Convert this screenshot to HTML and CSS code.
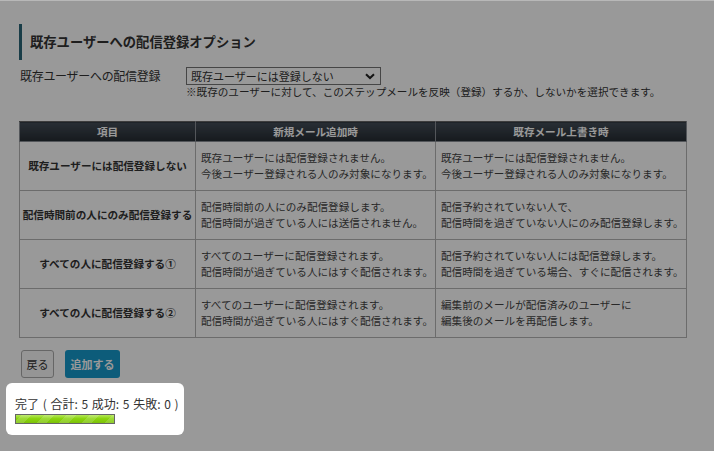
FILE: index.html
```html
<!DOCTYPE html>
<html lang="ja">
<head>
	<meta charset="UTF-8">
	<meta name="viewport" content="width=device-width, initial-scale=1.0">
	<title>既存ユーザーへの配信登録オプション</title>
	<link rel="stylesheet" href="styles.css">
</head>
<body>
	<div class="page">
		<h2 class="section-title">既存ユーザーへの配信登録オプション</h2>
		<div class="form-row">
			<div class="form-label">既存ユーザーへの配信登録</div>
			<div class="form-field">
				<div class="select-box">
					<span>既存ユーザーには登録しない</span>
					<svg class="chevron" width="10" height="7" viewBox="0 0 10 7"><path d="M1 1.2 L5 5 L9 1.2" fill="none" stroke="#222" stroke-width="2"/></svg>
				</div>
				<p class="note">※既存のユーザーに対して、このステップメールを反映（登録）するか、しないかを選択できます。</p>
			</div>
		</div>

		<table class="option-table">
			<colgroup>
				<col class="col-item">
				<col class="col-new">
				<col class="col-over">
			</colgroup>
			<thead>
				<tr>
					<th>項目</th>
					<th>新規メール追加時</th>
					<th>既存メール上書き時</th>
				</tr>
			</thead>
			<tbody>
				<tr>
					<td class="item-name">既存ユーザーには配信登録しない</td>
					<td>既存ユーザーには配信登録されません。<br>今後ユーザー登録される人のみ対象になります。</td>
					<td>既存ユーザーには配信登録されません。<br>今後ユーザー登録される人のみ対象になります。</td>
				</tr>
				<tr>
					<td class="item-name">配信時間前の人にのみ配信登録する</td>
					<td>配信時間前の人にのみ配信登録します。<br>配信時間が過ぎている人には送信されません。</td>
					<td>配信予約されていない人で、<br>配信時間を過ぎていない人にのみ配信登録します。</td>
				</tr>
				<tr>
					<td class="item-name">すべての人に配信登録する①</td>
					<td>すべてのユーザーに配信登録されます。<br>配信時間が過ぎている人にはすぐ配信されます。</td>
					<td>配信予約されていない人には配信登録します。<br>配信時間を過ぎている場合、すぐに配信されます。</td>
				</tr>
				<tr>
					<td class="item-name">すべての人に配信登録する②</td>
					<td>すべてのユーザーに配信登録されます。<br>配信時間が過ぎている人にはすぐ配信されます。</td>
					<td>編集前のメールが配信済みのユーザーに<br>編集後のメールを再配信します。</td>
				</tr>
			</tbody>
		</table>

		<div class="buttons">
			<a href="#" class="btn btn-back">戻る</a>
			<a href="#" class="btn btn-add">追加する</a>
		</div>
	</div>

	<div class="overlay"></div>

	<div class="progress-popup">
		<p class="progress-text">完了 ( 合計: 5 成功: 5 失敗: 0 )</p>
		<div class="progress-bar"><div class="progress-fill"></div></div>
	</div>
</body>
</html>
```

FILE: styles.css
```css
html, body{ margin: 0; padding: 0; background: #fff;}
body{
	font-family: "Noto Sans CJK JP", "Noto Sans", sans-serif;
	color: #333; font-size: 12px;
}
.page{ padding: 24px 0 0 19px; width: 667px;}

.section-title{
	margin: 0; height: 36px; line-height: 36px; padding-left: 8px;
	border-left: 3px solid #2a6678; font-size: 13.3px; font-weight: bold;
	color: #333;
}

.form-row{ display: flex; margin-top: 7px;}
.form-label{
	width: 166px; font-size: 12px; line-height: 18px; color: #333;
	margin-left: 1px; letter-spacing: -0.3px;
}
.form-field{ flex: 1;}
.select-box{
	width: 189px; height: 16px; border: 1px solid #767676; background: #fff;
	display: flex; align-items: center; justify-content: space-between;
	padding: 0 0 0 4px; font-size: 11px; line-height: 16px; color: #333;
}
.select-box .chevron{ margin-right: 5px;}
.note{ margin: 0; font-size: 10.6px; line-height: 14px; color: #333;}

.option-table{
	margin-top: 22px; width: 667px; border-collapse: collapse; table-layout: fixed;
	font-size: 10.6px; color: #444;
}
.col-item{ width: 176px;}
.col-new{ width: 240px;}
.col-over{ width: 251px;}
.option-table th{
	height: 19px; padding: 0; line-height: 19px; font-weight: bold; color: #fff;
	background: linear-gradient(#444e58, #252b32);
	border: 1px solid #8a9097; border-top-color: #666;
}
.option-table td{
	height: 48px; padding: 0 5px; line-height: 16px; border: 1px solid #b5b5b5;
	background: #fff; vertical-align: middle; white-space: nowrap;
}
.option-table td.item-name{
	padding: 0; text-align: center; font-weight: bold; color: #333;
}

.buttons{ display: flex; gap: 11px; margin-top: 12px; padding-left: 2px;}
.btn{
	display: block; height: 26px; line-height: 26px; border-radius: 3px;
	font-size: 11px; text-decoration: none; text-align: center;
}
.btn-back{ width: 31px; border: 1px solid #aaa; color: #333; background: #f8f8f8;}
.btn-add{ width: 55px; height: 28px; line-height: 28px; background: #1699cb; color: #fff; font-weight: bold;}

.overlay{
	position: fixed; left: 0; top: 0; right: 0; bottom: 0;
	background: rgba(0, 0, 0, 0.4); border-top: 1px solid #b8b8b8;
}

.progress-popup{
	position: fixed; left: 6px; top: 383px; width: 178px; height: 52px;
	background: #fff; border-radius: 6px; box-sizing: border-box; padding: 13px 0 0 9px;
}
.progress-text{ margin: 0; font-size: 12px; line-height: 16px; color: #333; word-spacing: 1px;}
.progress-bar{
	margin-top: 2px; width: 98px; height: 8px; border: 1px solid #666;
	background: #eee;
}
.progress-fill{
	width: 100%; height: 100%;
	background:
		repeating-linear-gradient(-45deg, rgba(255,255,255,0.16) 0 7px, rgba(255,255,255,0) 7px 16px),
		linear-gradient(#b5e85a, #8ad40e 45%, #7cc208);
}
```
